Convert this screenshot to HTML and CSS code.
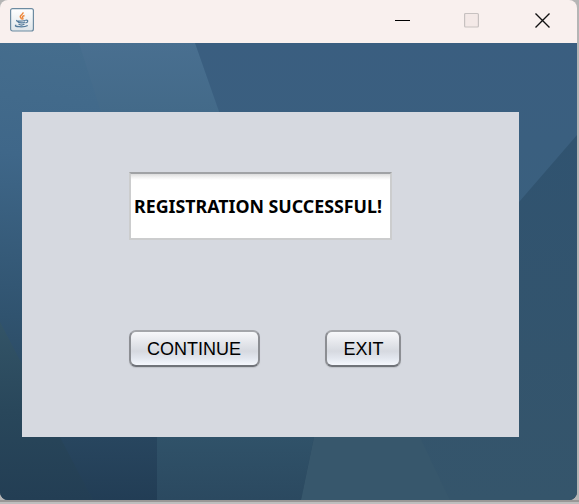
FILE: index.html
```html
<!DOCTYPE html>
<html lang="en">
<head>
<meta charset="utf-8">
<title>Registration</title>
<link rel="stylesheet" href="styles.css">
</head>
<body>
<div class="window">
  <header class="titlebar">
    <svg class="app-icon" width="24" height="24" viewBox="0 0 24 24">
      <defs><linearGradient id="tile" x1="0" y1="0" x2="0" y2="1"><stop offset="0" stop-color="#fff"/><stop offset="1" stop-color="#dfe5e9"/></linearGradient></defs>
      <rect x=".6" y=".6" width="22.8" height="22.4" rx="2" fill="url(#tile)" stroke="#6d8ba1" stroke-width="1.2"/>
      <path d="M13 4.300c1 2-4.300 3.100-2.400 5.200l1.100 1.800M14.500 7.500c-2.700.8-2.400 1.600-1.600 2.700.3.600 0 .9-.6 1.300" fill="none" stroke="#ee873a" stroke-width="1.400"/>
      <path d="M7 12.300c-2 .9 3.500 1.100 8.300.2M7.500 13.500c1 1.900 6.300 1.900 7.500.3M8.500 16c1.500 1.100 4.300 1.100 6 .1M15.500 12.300c3.100-.8 2.900 2.200 0 2.700M6.300 17.200c-4.300 1.200 7.700 2.700 11.400.2" fill="none" stroke="#51799a" stroke-width="1.200"/>
    </svg>
    <div class="controls">
      <svg width="16" height="16" viewBox="0 0 16 16"><path d="M0 8.500h15" stroke="#000"/></svg>
      <svg width="16" height="16" viewBox="0 0 16 16"><rect x="-.4" y="1.500" width="13.800" height="13.500" rx="1" fill="#f4e9e7" stroke="#c7c1c0" stroke-width="1.200"/></svg>
      <svg width="16" height="16" viewBox="0 0 16 16"><path d="M.5 1.500l14 14M14.500 1.500l-14 14" stroke="#111" stroke-width="1.400"/></svg>
    </div>
  </header>
  <main class="desktop">
    <svg class="backdrop" width="577" height="457" viewBox="0 0 577 457">
      <defs>
        <linearGradient id="left" x1=".12" y1="0" x2="0" y2="1"><stop offset="0" stop-color="#456d8d"/><stop offset=".25" stop-color="#3f6789"/><stop offset=".6" stop-color="#30536f"/><stop offset=".8" stop-color="#29475f"/><stop offset="1" stop-color="#223d54"/></linearGradient>
        <linearGradient id="band" x1="0" y1="0" x2="0" y2="69" gradientUnits="userSpaceOnUse"><stop offset="0" stop-color="#496f90"/><stop offset="1" stop-color="#436a89"/></linearGradient>
        <linearGradient id="sky" x1="0" y1="0" x2="0" y2="1"><stop offset="0" stop-color="#3a5e80"/><stop offset="1" stop-color="#3a607e"/></linearGradient>
        <linearGradient id="right" x1="0" y1="0" x2="0" y2="1"><stop offset="0" stop-color="#305370"/><stop offset="1" stop-color="#35556b"/></linearGradient>
        <linearGradient id="mid" x1="0" y1="394" x2="0" y2="457" gradientUnits="userSpaceOnUse"><stop offset="0" stop-color="#305269"/><stop offset="1" stop-color="#2b4960"/></linearGradient>
        <linearGradient id="green" x1="0" y1="0" x2="0" y2="1"><stop offset="0" stop-color="#335467"/><stop offset=".5" stop-color="#29475b"/><stop offset="1" stop-color="#233e54"/></linearGradient>
        <linearGradient id="navy" x1="0" y1="0" x2="0" y2="1"><stop offset="0" stop-color="#28465f"/><stop offset="1" stop-color="#223d55"/></linearGradient>
      </defs>
      <rect width="577" height="457" fill="url(#left)"/>
      <path d="M79 0H195L219 69H101Z" fill="url(#band)"/>
      <path d="M195 0H577V200H265Z" fill="url(#sky)"/>
      <path d="M577 92L519 159L400 300V457H577Z" fill="url(#right)"/>
      <path d="M0 279L60 394L93 457H0Z" fill="url(#green)"/>
      <path d="M60 394H157V457H93Z" fill="url(#navy)"/>
      <path d="M157 394H314L301 457H157Z" fill="url(#mid)"/>
      <path d="M314 394H420L450 457H301Z" fill="#37576c"/>
    </svg>
    <section class="panel">
      <div class="field"><span class="message">REGISTRATION SUCCESSFUL!</span></div>
      <div class="actions">
        <button class="btn btn-continue">CONTINUE</button>
        <button class="btn btn-exit">EXIT</button>
      </div>
    </section>
  </main>
</div>
</body>
</html>
```
FILE: styles.css
```css
* { box-sizing: border-box; }
body {
  margin: 0;
  width: 579px;
  height: 504px;
  overflow: hidden;
  background: linear-gradient(#b5b5b5 0 500px, #999796 500px 502px, #bebebe 502px);
}
.window {
  width: 577px;
  height: 500px;
  border-radius: 8px;
  overflow: hidden;
}
.titlebar {
  height: 43px;
  padding: 8px 26px 0 10px;
  display: flex;
  justify-content: space-between;
  background: #f9f0ee;
}
.controls { display: flex; gap: 54px; padding-top: 4px; }
.controls svg { display: block; overflow: visible; }
.desktop {
  position: relative;
  height: 457px;
  padding: 69px 0 0 22px;
}
.backdrop { position: absolute; inset: 0; }
.panel {
  position: relative;
  width: 497px;
  height: 325px;
  padding: 60px 0 0 107px;
  background: #d6d9e0;
}
.field {
  width: 263px;
  height: 68px;
  display: flex;
  align-items: center;
  padding: 0 0 1px 3px;
  border: 2px solid #cccdce;
  border-top-color: #a0a2a5;
  background: linear-gradient(#dcdcdc, #f1f1f1 3px, #fff 6px);
}
.message {
  font: bold 18px/24px "Noto Sans", sans-serif;
  color: #000;
  white-space: nowrap;
  transform: scaleX(.988);
  transform-origin: left;
}
.actions { display: flex; gap: 65px; margin-top: 89px; }
.btn {
  height: 37px;
  margin-top: 1px;
  padding: 1px 0 0;
  border: 2px solid #85878c;
  border-color: #a4a6aa #8c8e93 #707379;
  border-radius: 7px;
  background: linear-gradient(#f7f8fa, #e3e5ea 35%, #d6d9e0 58%, #e3e7ef 80%, #f5f8fd);
  box-shadow: 0 1px 1px #bfc2c8;
  font: 18px "Liberation Sans", Arial, sans-serif;
  color: #000;
}
.btn-continue { width: 131px; padding-right: 1px; }
.btn-exit { width: 76px; padding-left: 1px; }
```
